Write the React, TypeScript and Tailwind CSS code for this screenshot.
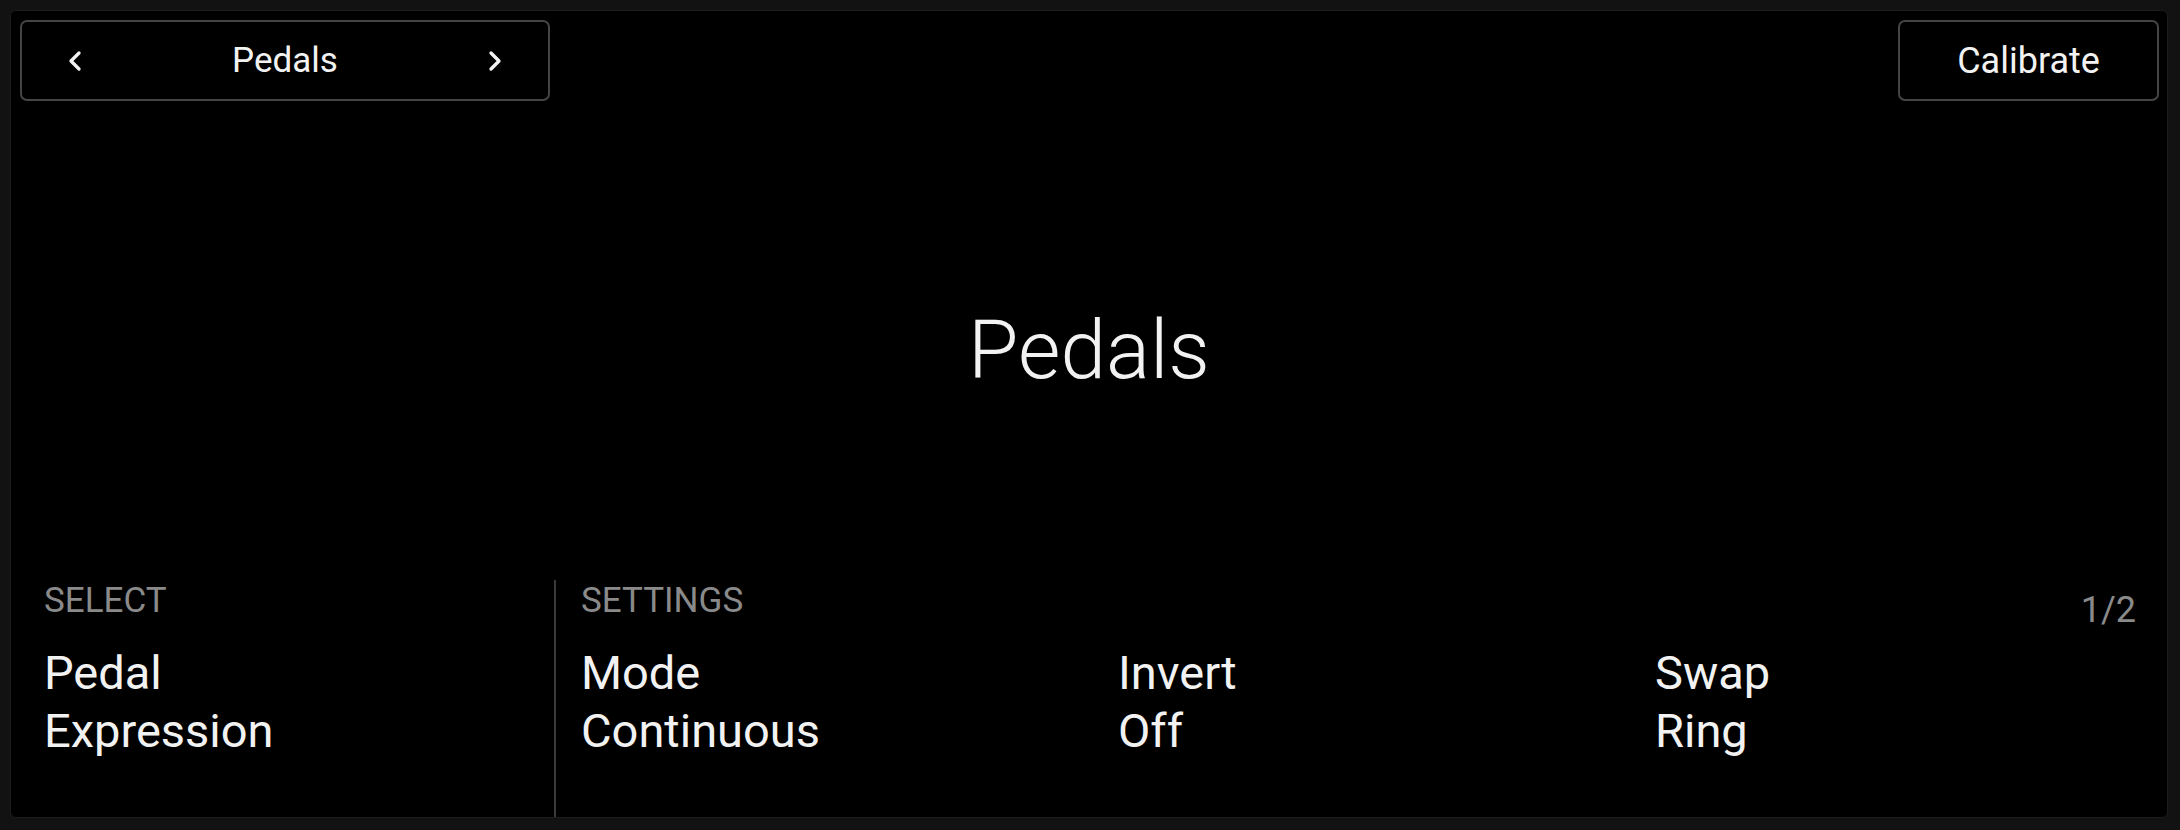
import { ChevronLeft, ChevronRight } from 'lucide-react';

const settings = [
    { name: 'Mode', value: 'Continuous' },
    { name: 'Invert', value: 'Off' },
    { name: 'Swap', value: 'Ring' },
];

const App = () => {
    return (
        <div className="w-[2180px] h-[830px] bg-[#121212] pt-[10px] pl-[10px] pr-[12px] pb-[12px] font-['Roboto',sans-serif] text-[#f2f2f2]">
            <div className="h-full flex flex-col bg-black rounded-[6px] border border-[#1c1c1c]">
                {/* Top bar */}
                <div className="flex justify-between pt-[9px] pl-[9px] pr-[8px]">
                    <div className="w-[530px] h-[81px] flex items-center justify-between px-[37px] border-2 border-[#454545] rounded-[7px]">
                        <ChevronLeft size={32} strokeWidth={2.5} />
                        <span className="text-[35px] leading-none">Pedals</span>
                        <ChevronRight size={32} strokeWidth={2.5} />
                    </div>
                    <div className="w-[261px] h-[81px] flex items-center justify-center border-2 border-[#454545] rounded-[7px]">
                        <span className="text-[36px] leading-none">Calibrate</span>
                    </div>
                </div>

                {/* Title */}
                <div className="flex-1 flex items-center justify-center pt-[19px]">
                    <h1 className="text-[82px] font-light leading-none">Pedals</h1>
                </div>

                {/* Bottom panel */}
                <div className="h-[237px] flex">
                    <div className="w-[543px] shrink-0 pl-[33px]">
                        <p className="text-[35px] leading-[42px] text-[#8a8a8a]">SELECT</p>
                        <div className="mt-[22px] text-[47px] leading-[58px]">
                            <p>Pedal</p>
                            <p>Expression</p>
                        </div>
                    </div>
                    <div className="flex-1 min-w-0 flex border-l-2 border-[#3a3a3a] pl-[25px] pr-[31px]">
                        <div className="flex-1">
                            <p className="text-[35px] leading-[42px] text-[#8a8a8a]">SETTINGS</p>
                            <div className="mt-[22px] grid grid-cols-[537px_537px_1fr]">
                                {settings.map((s) => (
                                    <div key={s.name} className="text-[47px] leading-[58px]">
                                        <p>{s.name}</p>
                                        <p>{s.value}</p>
                                    </div>
                                ))}
                            </div>
                        </div>
                        <p className="pt-[9px] text-[36px] leading-[43px] text-[#8a8a8a]">1/2</p>
                    </div>
                </div>
            </div>
        </div>
    );
};

export default App;
